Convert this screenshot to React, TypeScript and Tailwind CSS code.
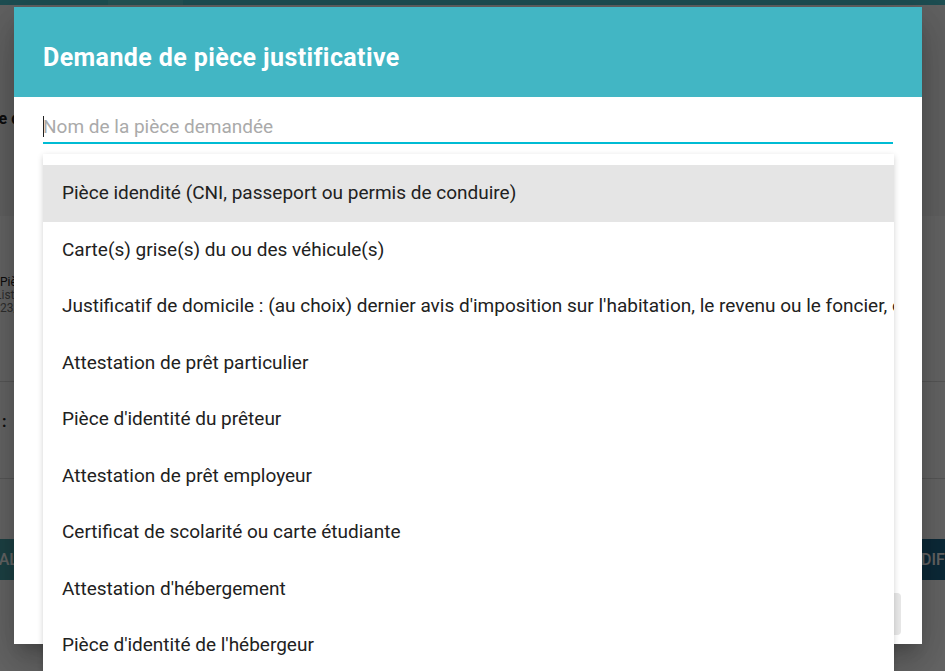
import React from 'react'

const pieces = [
  'Pièce idendité (CNI, passeport ou permis de conduire)',
  'Carte(s) grise(s) du ou des véhicule(s)',
  "Justificatif de domicile : (au choix) dernier avis d'imposition sur l'habitation, le revenu ou le foncier, ou facture de moins de 3 mois",
  'Attestation de prêt particulier',
  "Pièce d'identité du prêteur",
  'Attestation de prêt employeur',
  'Certificat de scolarité ou carte étudiante',
  "Attestation d'hébergement",
  "Pièce d'identité de l'hébergeur",
]

function BackgroundPage() {
  return (
    <div className="flex h-full flex-col">
      {/* top bar */}
      <div className="flex h-[5px]">
        <div className="w-[108px] bg-[#4cc6cf]" />
        <div className="w-[75px] bg-[#5ad0d8]" />
        <div className="flex-1 bg-[#4cc6cf]" />
      </div>

      <div className="flex h-[211px] flex-col bg-[#f4f4f4]">
        <div className="mt-[102px] -ml-[28px] whitespace-nowrap text-[16px] font-bold text-[#222]">Liste des pièces</div>
      </div>

      <div className="mt-[60px] flex flex-col whitespace-nowrap text-[12px] leading-[13px]">
        <span className="text-[#222]">Pièce d'identité</span>
        <span className="-ml-[5px] text-[#777]">Liste des demandes</span>
        <span className="text-[#777]">23/04/2021</span>
      </div>

      <div className="mt-[66px] h-px bg-[#dcdcdc]" />
      <div className="mt-[28px] pl-[2px] text-[16px] font-bold text-[#222]">:</div>
      <div className="mt-[44px] h-px bg-[#dcdcdc]" />

      <div className="mt-[60px] flex h-[41px] justify-between overflow-hidden">
        <div className="-ml-[11px] flex w-[130px] items-center whitespace-nowrap bg-[#4aa6ad] text-[16px] font-medium text-white">
          VALIDER
        </div>
        <div className="flex w-[120px] items-center whitespace-nowrap bg-[#1f6a8f] pl-[71px] text-[16px] font-medium text-white">
          MODIFIER
        </div>
      </div>
    </div>
  )
}

export default function App() {
  return (
    <div className="relative h-[671px] w-[945px] overflow-hidden bg-white font-['Roboto',sans-serif]">
      <BackgroundPage />

      {/* backdrop */}
      <div className="absolute inset-0 bg-black/60" />

      {/* dialog */}
      <div className="absolute left-[14px] top-[7px] flex h-[637px] w-[908px] flex-col bg-white shadow-[0_11px_15px_-7px_rgba(0,0,0,0.2),0_24px_38px_3px_rgba(0,0,0,0.14),0_9px_46px_8px_rgba(0,0,0,0.12)]">
        <div className="flex h-[90px] items-center bg-[#42b6c4] px-[29px] pt-[11px]">
          <h2 className="text-[25px] font-bold tracking-[0.4px] text-white">Demande de pièce justificative</h2>
        </div>

        <div className="px-[29px] pt-[14px]">
          <div className="relative border-b-2 border-[#00bcd4]">
            <input
              placeholder="Nom de la pièce demandée"
              className="h-[31px] w-full bg-transparent text-[19px] text-[#212121] outline-none placeholder:text-[#aaaaaa]"
            />
            <span className="absolute left-0 top-[5px] h-[21px] w-px bg-[#222]" />
          </div>
        </div>

        <div className="mt-auto flex justify-end gap-3 px-[21px] pb-[9px]">
          <button className="h-[42px] w-[110px] rounded bg-[#e6e6e6] text-[15px] font-medium text-[#555]">
            ANNULER
          </button>
        </div>
      </div>

      {/* autocomplete list */}
      <div className="absolute left-[43px] top-[154px] w-[851px] bg-white pt-[11px] shadow-[0_2px_6px_rgba(0,0,0,0.18)]">
        {pieces.map((p, i) => (
          <div
            key={p}
            className={
              'flex h-[56.5px] items-center overflow-hidden whitespace-nowrap px-[19px] text-[19px] text-[#212121] ' +
              (i === 0 ? 'bg-[#e5e5e5]' : '')
            }
          >
            {p}
          </div>
        ))}
      </div>
    </div>
  )
}
